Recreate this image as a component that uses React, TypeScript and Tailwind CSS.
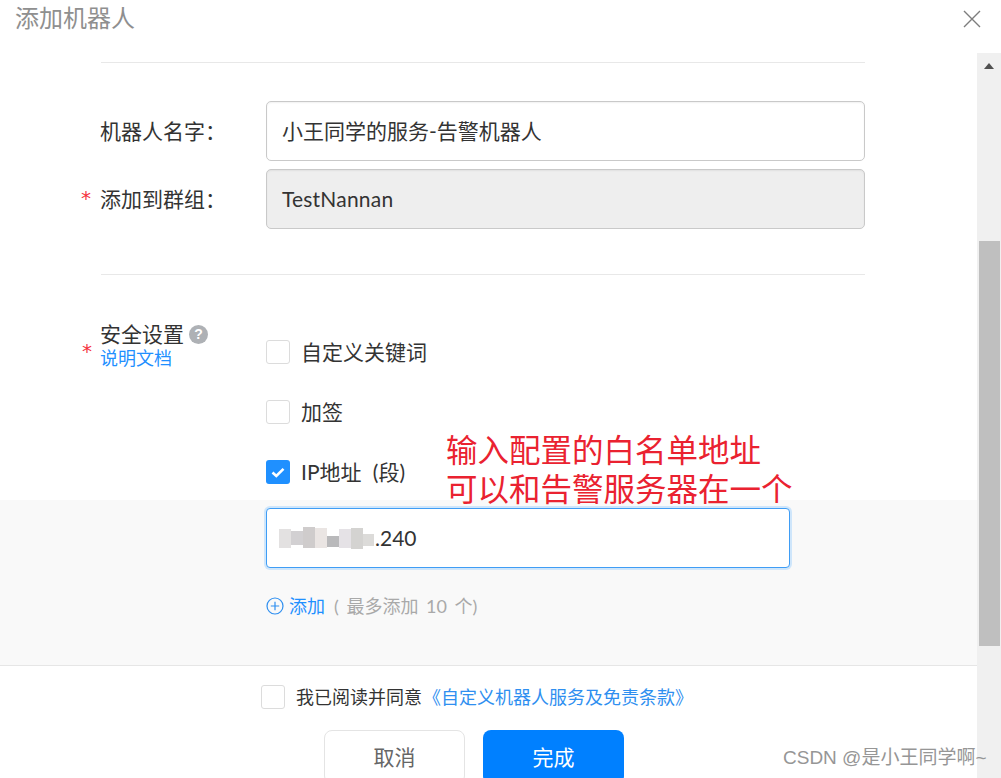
import React from 'react';

const cjk = "font-['Lato','Noto_Sans_CJK_SC',sans-serif]";

// mosaic that hides the first part of the address
const patches = [
  'h-[19px] mt-[2px] w-[12px] bg-[#e3e1e1]',
  'h-[14px] mt-[4px] w-[12px] bg-[#d2d0d2]',
  'h-[21px] mt-0 w-[12px] bg-[#cfcccc]',
  'h-[20px] mt-[1px] w-[12px] bg-[#eae5e3]',
  'h-[11px] mt-[9px] w-[12px] bg-[#b9b9bb]',
  'h-[19px] mt-[2px] w-[12px] bg-[#e5e2e6]',
  'h-[21px] mt-[1px] w-[12px] bg-[#d4d3d1]',
  'h-[12px] mt-[7px] w-[11px] bg-[#dcdbd9]',
];

function Box({ checked = false }: { checked?: boolean }) {
  if (checked) {
    return (
      <span className="flex h-6 w-6 shrink-0 items-center justify-center rounded-[3px] bg-[#1f90ff]">
        <svg width="14" height="11" viewBox="0 0 14 11" fill="none">
          <path d="M1.5 5.5 5.3 9 12.5 1.8" stroke="#fff" strokeWidth="2.6" />
        </svg>
      </span>
    );
  }
  return <span className="block h-6 w-6 shrink-0 rounded-[3px] border border-[#dcdcdc] bg-white" />;
}

function Star({ className }: { className: string }) {
  return (
    <span className={`absolute left-[-19px] font-['DejaVu_Sans',sans-serif] text-[20px] leading-[24px] text-[#f5323f] ${className}`}>
      *
    </span>
  );
}

function Label({ text, required = false }: { text: string; required?: boolean }) {
  return (
    <div className="flex w-[165px] items-center text-[21px] text-[#333]">
      <span className="relative -ml-px">
        {required && <Star className="top-[3px]" />}
        {text}
      </span>
    </div>
  );
}

function Option({ text, checked = false }: { text: string; checked?: boolean }) {
  return (
    <div className="flex h-6 items-center gap-3 text-[21px] text-[#333] [word-spacing:6px]">
      <Box checked={checked} />
      <span className="-ml-px">{text}</span>
    </div>
  );
}

export default function App() {
  return (
    <div className={`relative h-[778px] w-[1001px] overflow-hidden bg-white ${cjk}`}>
      {/* header */}
      <div className="flex h-[53px] items-start justify-between pl-[15px] pr-[20px]">
        <span className="text-[24px] leading-[36px] text-[#8f8f8f]">添加机器人</span>
        <svg className="mt-[10px]" width="18" height="18" viewBox="0 0 18 18" fill="none">
          <path d="M1 1 17 17M17 1 1 17" stroke="#7d7d7d" strokeWidth="1.4" />
        </svg>
      </div>

      <div className="flex h-[725px]">
        <div className="flex w-[977px] flex-col">
          {/* form */}
          <div className="h-[447px] shrink-0 pl-[101px]">
            <div className="mt-[9px] h-px w-[764px] bg-[#e8e8e8]" />

            <div className="mt-[38px] flex h-[60px] items-center">
              <Label text="机器人名字：" />
              <div className="flex h-full w-[599px] items-center rounded-[5px] border border-[#c9c9c9] px-[15px] text-[21px] text-[#333] shadow-[inset_0_1px_2px_rgba(0,0,0,0.06)]">
                小王同学的服务-告警机器人
              </div>
            </div>

            <div className="mt-2 flex h-[60px] items-center">
              <Label text="添加到群组：" required />
              <div className="flex h-full w-[599px] items-center rounded-[5px] border border-[#c9c9c9] bg-[#eeeeee] px-[15px] text-[21px] tracking-[0.2px] text-[#333] shadow-[inset_0_1px_2px_rgba(0,0,0,0.06)]">
                TestNannan
              </div>
            </div>

            <div className="mt-[45px] h-px w-[764px] bg-[#e8e8e8]" />

            <div className="flex">
              <div className="relative mt-[46px] w-[165px]">
                <Star className="top-[18px]" />
                <div className="-ml-px flex h-[26px] items-center gap-[5px] text-[21px] leading-[26px] text-[#333]">
                  安全设置
                  <span className="flex h-[19px] w-[19px] items-center justify-center rounded-full bg-[#aeb1b5] font-['Liberation_Sans',sans-serif] text-[14px] font-bold text-white">
                    ?
                  </span>
                </div>
                <div className="-ml-px text-[18px] leading-[22px] text-[#1f90ff]">说明文档</div>
              </div>
              <div className="mt-[65px] flex flex-col gap-9">
                <Option text="自定义关键词" />
                <Option text="加签" />
                <Option text="IP地址 (段)" checked />
              </div>
            </div>
          </div>

          {/* ip section */}
          <div className="h-[165px] shrink-0 bg-[#f9f9f9] pl-[266px] pt-2">
            <div className="relative flex h-[60px] w-[524px] items-center rounded-[4px] border border-[#3f9df5] bg-white px-[15px] text-[21px] text-[#333] shadow-[0_0_0_2px_#cfe6fb]">
              <span className="pl-[93px]">.240</span>
              <div className="absolute left-[12px] top-[18px] flex blur-[0.6px]">
                {patches.map((p, i) => (
                  <div key={i} className={p} />
                ))}
              </div>
            </div>
            <div className="mt-[26px] flex h-6 items-center text-[18px]">
              <svg width="18" height="18" viewBox="0 0 18 18" fill="none" stroke="#2f8ff0" strokeWidth="1.2">
                <circle cx="9" cy="9" r="8" />
                <path d="M9 4.8v8.4M4.8 9h8.4" />
              </svg>
              <span className="ml-[5px] text-[#1f90ff]">添加</span>
              <span className="ml-[9px] text-[#a9a9a9] [word-spacing:3px]">( 最多添加 10 个)</span>
            </div>
          </div>

          {/* footer */}
          <div className="shrink-0 border-t border-[#e6e6e6]">
            <div className="mt-[19px] flex h-6 items-center pl-[261px] text-[18px]">
              <Box />
              <span className="ml-[11px] pt-px text-[#333]">我已阅读并同意</span>
              <span className="ml-[1px] pt-px text-[#2f8ff0]">《自定义机器人服务及免责条款》</span>
            </div>
            <div className="mt-[21px] flex gap-[18px] pl-[324px]">
              <div className="flex h-[54px] w-[141px] items-center justify-center rounded-[8px] border border-[#e4e4e4] text-[21px] text-[#666]">
                取消
              </div>
              <div className="flex h-[54px] w-[141px] items-center justify-center rounded-[8px] bg-[#0080ff] text-[21px] text-white">
                完成
              </div>
            </div>
          </div>
        </div>

        {/* scrollbar */}
        <div className="relative w-6 bg-[#f0f0f0]">
          <div className="absolute left-[7px] top-[10px] h-0 w-0 border-x-[5px] border-b-[6px] border-x-transparent border-b-[#505050]" />
          <div className="absolute left-[2px] top-[188px] h-[405px] w-[21px] bg-[#bfbfbf]" />
        </div>
      </div>

      {/* red note over the form */}
      <div className="absolute left-[446px] top-[431px] text-[31.5px] leading-[39px] text-[#ea2230]">
        输入配置的白名单地址
        <br />
        可以和告警服务器在一个
      </div>

      {/* watermark */}
      <div className="absolute left-[783px] top-[746px] whitespace-nowrap font-['Liberation_Sans','Noto_Sans_CJK_SC',sans-serif] text-[19px] leading-[24px] text-[#969696]">
        CSDN @是小王同学啊~
      </div>
    </div>
  );
}
